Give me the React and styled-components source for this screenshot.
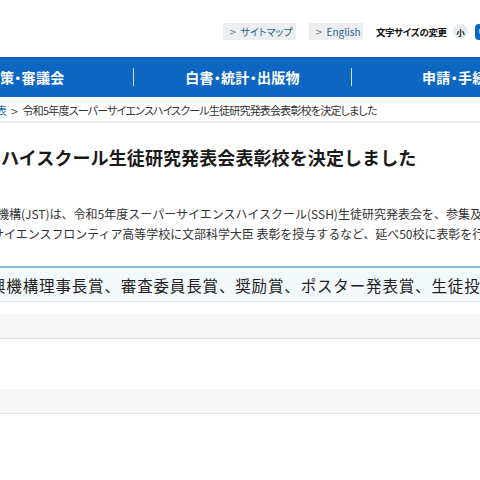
import React from "react";
import styled, { createGlobalStyle } from "styled-components";

const Global = createGlobalStyle`
  html, body { margin: 0; padding: 0; background: #fff; overflow: hidden; }
  body { font-family: "Noto Sans CJK JP", "Noto Sans", sans-serif; color: #333; }
`;

const Page = styled.div`
  width: 480px;
  height: 480px;
  overflow: hidden;
  white-space: nowrap;
`;

const Header = styled.header`
  height: 57px;
  display: flex;
  align-items: flex-start;
  padding: 23px 0 0 223px;
  box-sizing: border-box;
  gap: 13px;
`;

const UtilLink = styled.a`
  display: flex;
  align-items: center;
  height: 17px;
  width: ${(p) => p.$w}px;
  flex: none;
  box-sizing: border-box;
  padding-left: 6px;
  background: #eceef0;
  color: #2b5f93;
  font-size: 10px;
  text-decoration: none;
  font-feature-settings: "palt";
  &::before {
    content: ">";
    color: #6a7480;
    margin-right: 4px;
    font-family: "DejaVu Sans", sans-serif;
    font-size: 9px;
  }
`;

const SizeGroup = styled.div`
  display: flex;
  align-items: center;
  height: 17px;
  flex: none;
`;

const SizeLabel = styled.span`
  font-size: 9.5px;
  font-weight: 700;
  color: #111;
  font-feature-settings: "palt";
  letter-spacing: -0.4px;
  width: 70px;
  margin-right: 7px;
`;

const SizeDot = styled.span`
  flex: none;
  display: inline-flex;
  align-items: center;
  justify-content: center;
  width: 15px;
  height: 15px;
  border-radius: 50%;
  background: #e3ecef;
  color: #222;
  font-size: 8.5px;
  font-weight: 700;
`;

const SizeBox = styled.span`
  flex: none;
  display: inline-flex;
  align-items: center;
  justify-content: center;
  width: 16px;
  height: 16px;
  margin-left: 7px;
  border-radius: 4px;
  background: #0d66c2;
  color: #fff;
  font-size: 9px;
  font-weight: 700;
`;

const Nav = styled.nav`
  height: 40px;
  background: #0d66c2;
  display: flex;
  align-items: center;
`;

const NavItem = styled.div`
  width: ${(p) => p.$w}px;
  flex: none;
  display: flex;
  justify-content: ${(p) => (p.$left ? "flex-start" : "center")};
  color: #fff;
  font-size: 14px;
  font-weight: 700;
  letter-spacing: 0.3px;
  font-feature-settings: "palt";
`;

const NavSep = styled.span`
  flex: none;
  width: 1px;
  height: 18px;
  background: #ffffffcc;
`;

const Breadcrumb = styled.div`
  height: 21px;
  padding-top: 3px;
  line-height: 21px;
  font-size: 11px;
  color: #333;
  border-bottom: 2px solid #e6e6e6;
  font-feature-settings: "palt";
  letter-spacing: -0.8px;
`;

const Crumb = styled.a`
  color: #2767b0;
  text-decoration: none;
  margin-left: -4px;
`;

const Gt = styled.span`
  color: #555;
  margin: 0 4px 0 4px;
  font-family: "DejaVu Sans", sans-serif;
  font-size: 10px;
  letter-spacing: 0;
`;

const Title = styled.h1`
  margin: 21px 0 0;
  font-size: 18px;
  line-height: 26px;
  font-weight: 700;
  color: #1a1a1a;
  letter-spacing: 0.1px;
  padding-left: 1px;
`;

const Para = styled.div`
  margin-top: 34px;
  font-size: 12px;
  line-height: 20px;
  color: #333;
`;

const Line = styled.div`
  margin-left: ${(p) => p.$shift || 0}px;
  letter-spacing: ${(p) => p.$ls || 0}px;
`;

const AwardHeading = styled.h2`
  margin: 22px 0 0;
  height: 33px;
  display: flex;
  align-items: center;
  background: #f3f8fa;
  border-top: 2px solid #88bfd3;
  border-bottom: 1px solid #dfe6e8;
  font-size: 15.5px;
  font-weight: 400;
  color: #1e1e1e;
  letter-spacing: 0.85px;
`;

const AwardText = styled.span`
  margin-left: -10px;
`;

const Row = styled.div`
  margin-top: ${(p) => p.$mt}px;
  height: 24px;
  background: #f7f7f7;
  border-bottom: 1px solid #e2e2e2;
`;

export default function App() {
  return (
    <Page>
      <Global />
      <Header>
        <UtilLink $w={73} href="#">サイトマップ</UtilLink>
        <UtilLink $w={54} href="#">English</UtilLink>
        <SizeGroup>
          <SizeLabel>文字サイズの変更</SizeLabel>
          <SizeDot>小</SizeDot>
          <SizeBox>中</SizeBox>
        </SizeGroup>
      </Header>
      <Nav>
        <NavItem $w={133} $left>策・審議会</NavItem>
        <NavSep />
        <NavItem $w={217}>白書・統計・出版物</NavItem>
        <NavSep />
        <NavItem $w={217}>申請・手続き</NavItem>
      </Nav>
      <Breadcrumb>
        <Crumb href="#">表</Crumb>
        <Gt>&gt;</Gt>
        令和5年度スーパーサイエンスハイスクール生徒研究発表会表彰校を決定しました
      </Breadcrumb>
      <Title>ハイスクール生徒研究発表会表彰校を決定しました</Title>
      <Para>
        <Line $shift={-3}>機構(JST)は、令和5年度スーパーサイエンスハイスクール(SSH)生徒研究発表会を、参集及び</Line>
        <Line $shift={-8} $ls={-0.05}>サイエンスフロンティア高等学校に文部科学大臣 表彰を授与するなど、延べ50校に表彰を行いました。</Line>
      </Para>
      <AwardHeading>
        <AwardText>興機構理事長賞、審査委員長賞、奨励賞、ポスター発表賞、生徒投票賞</AwardText>
      </AwardHeading>
      <Row $mt={12} />
      <Row $mt={50} />
    </Page>
  );
}
